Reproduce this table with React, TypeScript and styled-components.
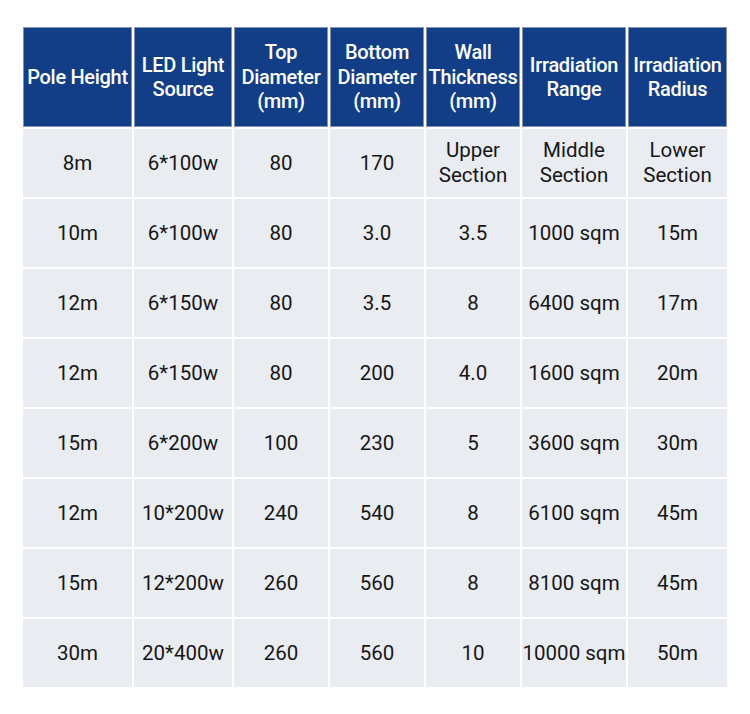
import React from "react";
import styled, { createGlobalStyle } from "styled-components";

const GlobalStyle = createGlobalStyle`
  html, body { margin: 0; padding: 0; background: #ffffff; }
  body { font-family: Roboto, "Liberation Sans", Arial, sans-serif; }
`;

const Page = styled.div`
  width: 750px;
  height: 714px;
  box-sizing: border-box;
  padding: 27px 0 0 23px;
  background: #ffffff;
`;

const Grid = styled.div`
  display: grid;
  grid-template-columns: 109px 98px 94px 94px 94px 104px 99px;
  grid-template-rows: 100px repeat(8, 68px);
  gap: 2px;
  width: 704px;
  background: #ffffff;
`;

const HeadCell = styled.div`
  background: #123e88;
  color: #ffffff;
  font-size: 20px;
  font-weight: 500;
  line-height: 24.5px;
  letter-spacing: -0.3px;
  display: flex;
  align-items: center;
  justify-content: center;
  text-align: center;
  white-space: pre-line;
  box-shadow: inset 0 0 0 1px #8393b0;
`;

const Cell = styled.div`
  background: #e9ecf1;
  color: #161616;
  font-size: 20.5px;
  line-height: 25px;
  display: flex;
  align-items: center;
  justify-content: center;
  text-align: center;
  white-space: pre-line;
`;

const headers = [
  "Pole Height",
  "LED Light\nSource",
  "Top\nDiameter\n(mm)",
  "Bottom\nDiameter\n(mm)",
  "Wall\nThickness\n(mm)",
  "Irradiation\nRange",
  "Irradiation\nRadius",
];

const rows: string[][] = [
  ["8m", "6*100w", "80", "170", "Upper\nSection", "Middle\nSection", "Lower\nSection"],
  ["10m", "6*100w", "80", "3.0", "3.5", "1000 sqm", "15m"],
  ["12m", "6*150w", "80", "3.5", "8", "6400 sqm", "17m"],
  ["12m", "6*150w", "80", "200", "4.0", "1600 sqm", "20m"],
  ["15m", "6*200w", "100", "230", "5", "3600 sqm", "30m"],
  ["12m", "10*200w", "240", "540", "8", "6100 sqm", "45m"],
  ["15m", "12*200w", "260", "560", "8", "8100 sqm", "45m"],
  ["30m", "20*400w", "260", "560", "10", "10000 sqm", "50m"],
];

export default function App() {
  return (
    <Page>
      <GlobalStyle />
      <Grid>
        {headers.map((h) => (
          <HeadCell key={h}>{h}</HeadCell>
        ))}
        {rows.map((r, i) =>
          r.map((c, j) => <Cell key={`${i}-${j}`}>{c}</Cell>)
        )}
      </Grid>
    </Page>
  );
}
